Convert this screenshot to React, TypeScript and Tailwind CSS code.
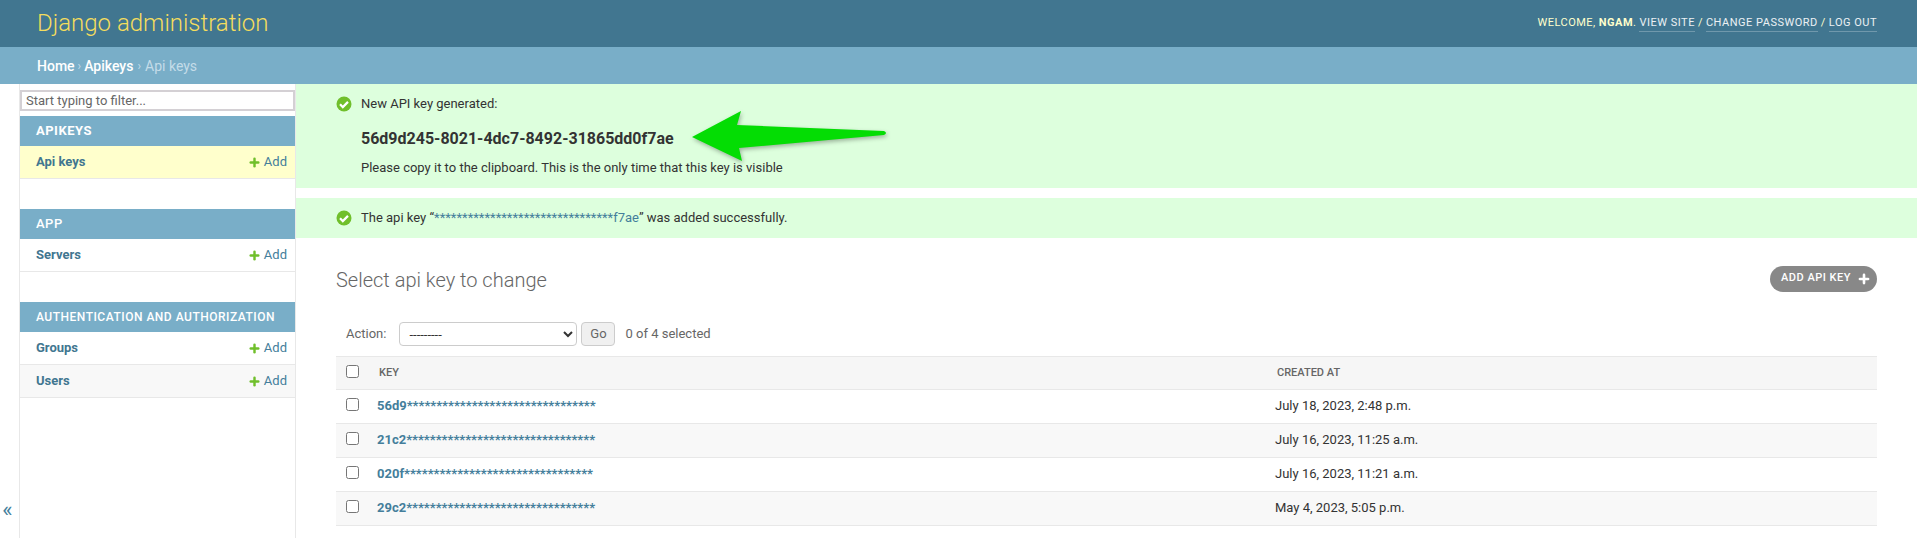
import { Plus } from "lucide-react";

const models = [
  {
    caption: "APIKEYS",
    captionClass: "font-bold text-[13px] tracking-[0.5px]",
    rows: [{ name: "Api keys", current: true }],
  },
  {
    caption: "APP",
    captionClass: "font-medium text-[13px] tracking-[0.5px]",
    rows: [{ name: "Servers", current: false }],
  },
  {
    caption: "AUTHENTICATION AND AUTHORIZATION",
    captionClass: "font-medium text-[12px] tracking-[0.5px]",
    rows: [
      { name: "Groups", current: false },
      { name: "Users", current: false, alt: true },
    ],
  },
];

const keys = [
  { key: "56d9********************************", date: "July 18, 2023, 2:48 p.m." },
  { key: "21c2********************************", date: "July 16, 2023, 11:25 a.m." },
  { key: "020f********************************", date: "July 16, 2023, 11:21 a.m." },
  { key: "29c2********************************", date: "May 4, 2023, 5:05 p.m." },
];

function CheckIcon() {
  return (
    <svg viewBox="0 0 16 16" className="w-[16px] h-[16px] shrink-0">
      <circle cx="8" cy="8" r="7.5" fill="#70bf2b" />
      <path d="M4 8.3l2.8 2.8L12 5.9" fill="none" stroke="#fff" strokeWidth="2.2" />
    </svg>
  );
}

export default function App() {
  return (
    <div className="h-[538px] overflow-hidden bg-white text-[#333] font-['Roboto',sans-serif] text-[13px] flex flex-col relative">
      <div className="h-[47px] shrink-0 bg-[#417690] flex items-center justify-between pl-[37px] pr-[40px]">
        <h1 className="text-[24px] font-light text-[#f5dd5d] mb-[2px]">Django administration</h1>
        <div className="text-[11px] tracking-[0.5px] text-[#ffc] flex items-center">
          WELCOME, <strong className="font-bold ml-[3px]">NGAM</strong>.
          <a className="ml-[3px] border-b border-white/25 text-white/90">VIEW SITE</a>
          <span className="mx-[3px]">/</span>
          <a className="border-b border-white/25 text-white/90">CHANGE PASSWORD</a>
          <span className="mx-[3px]">/</span>
          <a className="border-b border-white/25 text-white/90">LOG OUT</a>
        </div>
      </div>

      <div className="h-[37px] shrink-0 bg-[#79aec8] flex items-center pl-[37px] pt-[1px] text-[14px] text-[#c4dce8]">
        <a className="text-white font-medium">Home</a>
        <span className="mx-[3px] text-[12px]">›</span>
        <a className="text-white font-medium">Apikeys</a>
        <span className="mx-[4px] text-[12px]">›</span>
        <span>Api keys</span>
      </div>

      <div className="flex flex-1 min-h-0">
        <div className="w-[20px] shrink-0 border-r border-[#e8e8e8] flex items-end justify-center pb-[17px] pr-[4px]">
          <span className="text-[22px] leading-none text-[#447e9b]">«</span>
        </div>

        <div className="w-[276px] shrink-0 border-r border-[#e8e8e8] pt-[6px]">
          <input
            placeholder="Start typing to filter..."
            className="w-full h-[21px] border-2 border-[#d4d0d4] px-[4px] text-[13px] outline-none placeholder:text-[#666]"
          />
          <div className="mt-[5px] flex flex-col gap-[30px]">
            {models.map((m) => (
              <div key={m.caption}>
                <div className={`h-[30px] bg-[#79aec8] text-white flex items-center pl-[16px] ${m.captionClass}`}>
                  {m.caption}
                </div>
                {m.rows.map((r) => (
                  <div
                    key={r.name}
                    className={
                      r.current
                        ? "h-[33px] bg-[#ffc] border-b border-[#e8e8e8] flex items-center justify-between pl-[16px] pr-[8px]"
                        : r.alt
                          ? "h-[33px] bg-[#f8f8f8] border-b border-[#e8e8e8] flex items-center justify-between pl-[16px] pr-[8px]"
                          : "h-[33px] bg-white border-b border-[#e8e8e8] flex items-center justify-between pl-[16px] pr-[8px]"
                    }
                  >
                    <a className="text-[13px] font-bold text-[#417690]">{r.name}</a>
                    <span className="flex items-center gap-[3px] text-[#447e9b]">
                      <Plus className="w-[13px] h-[13px] text-[#70bf2b]" strokeWidth={4.5} />
                      Add
                    </span>
                  </div>
                ))}
              </div>
            ))}
          </div>
        </div>

        <div className="flex-1 min-w-0 relative">
          <div className="h-[104px] bg-[#dfd] pl-[40px] pt-[11px]">
            <div className="flex items-center gap-[9px] h-[17px]">
              <CheckIcon />
              <span>New API key generated:</span>
            </div>
            <div className="ml-[25px] mt-[16px] text-[16px] font-bold leading-[22px]">
              56d9d245-8021-4dc7-8492-31865dd0f7ae
            </div>
            <div className="ml-[25px] mt-[8px]">
              Please copy it to the clipboard. This is the only time that this key is visible
            </div>
          </div>
          <div className="h-[40px] mt-[10px] bg-[#dfd] pl-[40px] flex items-center gap-[9px]">
            <CheckIcon />
            <span>
              The api key “<a className="text-[#447e9b]">********************************f7ae</a>” was added
              successfully.
            </span>
          </div>

          <div className="pl-[40px] pr-[40px]">
            <div className="flex items-center justify-between mt-[27px]">
              <h2 className="text-[20px] font-light text-[#666]">Select api key to change</h2>
              <a className="h-[26px] mb-[3px] rounded-[13px] bg-[#888] text-white text-[11px] font-medium tracking-[0.5px] flex items-center pl-[11px] pr-[6px] gap-[6px]">
                ADD API KEY
                <Plus className="w-[14px] h-[14px]" strokeWidth={4.5} />
              </a>
            </div>

            <div className="flex items-center mt-[27px] h-[24px]">
              <span className="ml-[10px] text-[#666]">Action:</span>
              <select className="ml-[13px] w-[178px] h-[24px] border border-[#ccc] rounded-[4px] bg-white text-[13px] pl-[5px]">
                <option>---------</option>
              </select>
              <button className="ml-[4px] h-[24px] w-[34px] border border-[#ccc] rounded-[4px] bg-[#f0f0f0] text-[#666]">
                Go
              </button>
              <span className="ml-[10px] text-[#666]">0 of 4 selected</span>
            </div>

            <table className="w-full mt-[10px] border-collapse">
              <thead>
                <tr className="h-[33px] bg-[#f6f6f6] border-t border-b border-[#e8e8e8]">
                  <th className="w-[41px] pl-[10px] pb-[4px] text-left">
                    <input type="checkbox" className="block" />
                  </th>
                  <th className="w-[898px] pl-[2px] pt-[1px] text-left text-[11px] font-medium text-[#666]">KEY</th>
                  <th className="pl-[2px] pt-[1px] text-left text-[11px] font-medium text-[#666]">CREATED AT</th>
                </tr>
              </thead>
              <tbody>
                {keys.map((k, i) => (
                  <tr
                    key={k.key}
                    className={
                      i % 2 === 1
                        ? "h-[34px] bg-[#f8f8f8] border-b border-[#e8e8e8]"
                        : "h-[34px] bg-white border-b border-[#e8e8e8]"
                    }
                  >
                    <td className="pl-[10px] pb-[4px]">
                      <input type="checkbox" className="block" />
                    </td>
                    <td className="pb-[2px] font-bold text-[#447e9b]">{k.key}</td>
                    <td className="pb-[2px]">{k.date}</td>
                  </tr>
                ))}
              </tbody>
            </table>
          </div>

          <svg
            viewBox="0 0 200 56"
            className="absolute left-[396px] top-[26px] w-[200px] h-[56px] drop-shadow-[1px_2px_2px_rgba(0,0,0,0.3)]"
          >
            <path
              d="M0 27 L49 1 L45 15 L192 21 Q196 23 192 25 L47 38 L50 51 Z"
              fill="#04dd04"
            />
          </svg>
        </div>
      </div>
    </div>
  );
}
